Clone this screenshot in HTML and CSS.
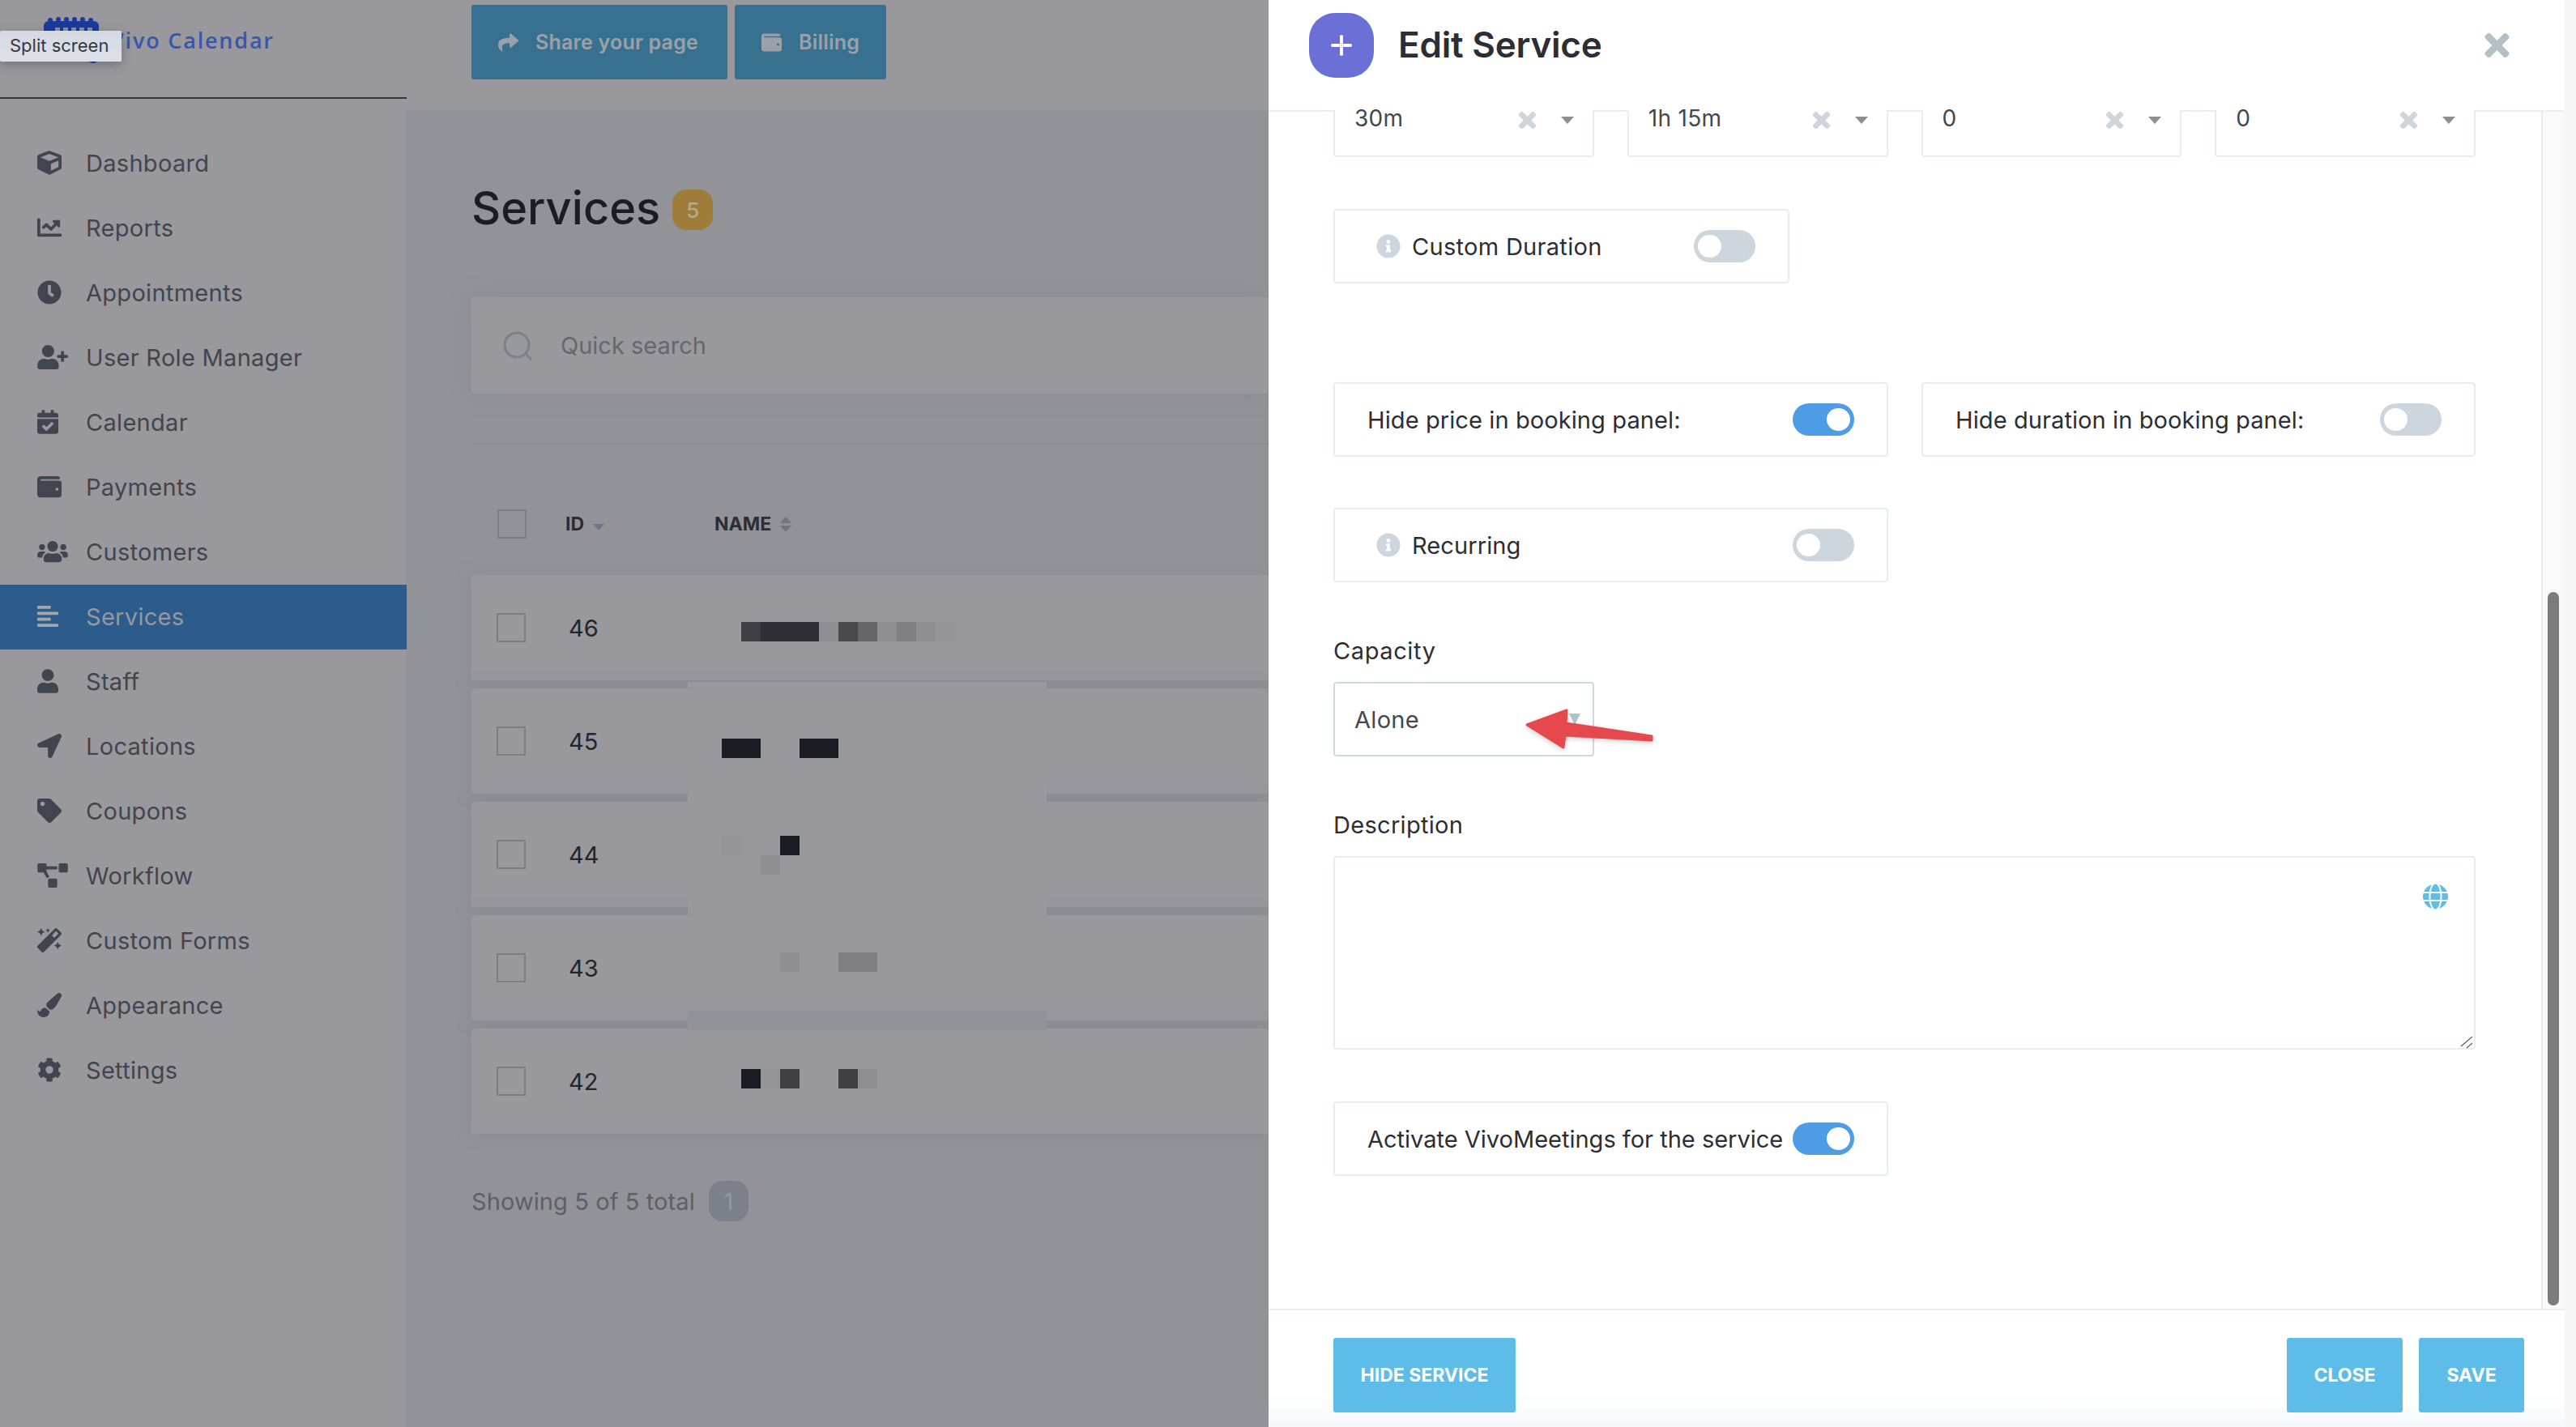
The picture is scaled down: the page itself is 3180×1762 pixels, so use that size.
FILE: index.html
```html
<!DOCTYPE html>
<html lang="en">
  <head>
    <meta charset="UTF-8" />
    <meta name="viewport" content="width=device-width, initial-scale=1.0" />
    <title>Vivo Calendar - Edit Service</title>
    <link rel="stylesheet" href="styles.css">
  </head>
  <body>
    <svg class="sprites" aria-hidden="true">
      <symbol id="i-cube" viewBox="0 0 512 512"><path d="M239.1 6.3l-208 78c-18.7 7-31.1 25-31.1 45v225.1c0 18.2 10.3 34.8 26.5 42.9l208 104c13.5 6.8 29.4 6.8 42.9 0l208-104c16.3-8.1 26.5-24.8 26.5-42.9V129.3c0-20-12.4-37.9-31.1-44.9l-208-78C262 2.2 250 2.2 239.1 6.3zM256 68.4l192 72v1.1l-192 78-192-78v-1.1l192-72zm32 356V275.5l160-65v133.9l-160 80z"/></symbol>
      <symbol id="i-chart" viewBox="0 0 512 512"><path d="M496 384H64V80c0-8.84-7.16-16-16-16H16C7.16 64 0 71.16 0 80v336c0 17.67 14.33 32 32 32h464c8.84 0 16-7.16 16-16v-32c0-8.84-7.16-16-16-16zM464 96H345.94c-21.38 0-32.09 25.85-16.97 40.97l32.4 32.4L288 242.75l-73.37-73.37c-12.5-12.5-32.76-12.5-45.25 0l-68.69 68.69c-6.25 6.25-6.25 16.38 0 22.63l22.62 22.62c6.25 6.25 16.38 6.25 22.63 0L192 237.25l73.37 73.37c12.5 12.5 32.76 12.5 45.25 0l96-96 32.4 32.4c15.12 15.12 40.97 4.41 40.97-16.97V112c.01-8.84-7.15-16-15.99-16z"/></symbol>
      <symbol id="i-clock" viewBox="0 0 512 512"><path d="M256,8C119,8,8,119,8,256S119,504,256,504,504,393,504,256,393,8,256,8Zm92.49,313h0l-20,25a16,16,0,0,1-22.49,2.5h0l-67-49.72a40,40,0,0,1-15-31.23V112a16,16,0,0,1,16-16h32a16,16,0,0,1,16,16V256l58,42.5A16,16,0,0,1,348.49,321Z"/></symbol>
      <symbol id="i-user-plus" viewBox="0 0 640 512"><path d="M624 208h-64v-64c0-8.8-7.2-16-16-16h-32c-8.8 0-16 7.2-16 16v64h-64c-8.8 0-16 7.2-16 16v32c0 8.8 7.2 16 16 16h64v64c0 8.8 7.2 16 16 16h32c8.8 0 16-7.2 16-16v-64h64c8.8 0 16-7.2 16-16v-32c0-8.8-7.2-16-16-16zm-400 48c70.7 0 128-57.3 128-128S294.7 0 224 0 96 57.3 96 128s57.3 128 128 128zm89.6 32h-16.7c-22.2 10.2-46.9 16-72.9 16s-50.6-5.8-72.9-16h-16.7C60.2 288 0 348.2 0 422.4V464c0 26.5 21.5 48 48 48h352c26.5 0 48-21.5 48-48v-41.6c0-74.2-60.2-134.4-134.4-134.4z"/></symbol>
      <symbol id="i-calendar" viewBox="0 0 448 512"><path d="M436 160H12c-6.627 0-12-5.373-12-12v-36c0-26.51 21.49-48 48-48h48V12c0-6.627 5.373-12 12-12h40c6.627 0 12 5.373 12 12v52h128V12c0-6.627 5.373-12 12-12h40c6.627 0 12 5.373 12 12v52h48c26.51 0 48 21.49 48 48v36c0 6.627-5.373 12-12 12zM12 192h424c6.627 0 12 5.373 12 12v260c0 26.51-21.49 48-48 48H48c-26.51 0-48-21.49-48-48V204c0-6.627 5.373-12 12-12zm333.296 95.947l-28.169-28.398c-4.667-4.705-12.265-4.736-16.97-.068L194.12 364.665l-45.98-46.352c-4.667-4.705-12.266-4.736-16.971-.068l-28.397 28.17c-4.705 4.667-4.736 12.265-.068 16.97l82.601 83.269c4.667 4.705 12.265 4.736 16.97.068l142.953-141.805c4.705-4.667 4.736-12.265.068-16.97z"/></symbol>
      <symbol id="i-wallet" viewBox="0 0 512 512"><path d="M461.2 128H80c-8.84 0-16-7.16-16-16s7.16-16 16-16h384c8.84 0 16-7.16 16-16 0-26.51-21.49-48-48-48H64C28.65 32 0 60.65 0 96v320c0 35.35 28.65 64 64 64h397.2c28.02 0 50.8-21.53 50.8-48V176c0-26.47-22.78-48-50.8-48zM416 340c-17.67 0-32-14.33-32-32s14.33-32 32-32 32 14.33 32 32-14.33 32-32 32z"/></symbol>
      <symbol id="i-users" viewBox="0 0 640 512"><path d="M96 224c35.3 0 64-28.7 64-64s-28.7-64-64-64-64 28.7-64 64 28.7 64 64 64zm448 0c35.3 0 64-28.7 64-64s-28.7-64-64-64-64 28.7-64 64 28.7 64 64 64zm32 32h-64c-17.6 0-33.5 7.1-45.1 18.6 40.3 22.1 68.9 62 75.1 109.4h66c17.7 0 32-14.3 32-32v-32c0-35.3-28.7-64-64-64zm-256 0c61.9 0 112-50.1 112-112S381.9 32 320 32 208 82.1 208 144s50.1 112 112 112zm76.8 32h-8.3c-20.8 10-43.9 16-68.5 16s-47.6-6-68.5-16h-8.3C179.6 288 128 339.6 128 403.2V432c0 26.5 21.5 48 48 48h288c26.5 0 48-21.5 48-48v-28.8c0-63.6-51.6-115.2-115.2-115.2zm-223.7-13.4C161.5 263.1 145.6 256 128 256H64c-35.3 0-64 28.7-64 64v32c0 17.7 14.3 32 32 32h65.9c6.3-47.4 34.9-87.3 75.2-109.4z"/></symbol>
      <symbol id="i-align" viewBox="0 0 448 512"><path d="M12.83 352h262.34A12.82 12.82 0 0 0 288 339.17v-38.34A12.82 12.82 0 0 0 275.17 288H12.83A12.82 12.82 0 0 0 0 300.83v38.34A12.82 12.82 0 0 0 12.83 352zm0-256h262.34A12.82 12.82 0 0 0 288 83.17V44.83A12.82 12.82 0 0 0 275.17 32H12.83A12.82 12.82 0 0 0 0 44.83v38.34A12.82 12.82 0 0 0 12.83 96zM432 160H16a16 16 0 0 0-16 16v32a16 16 0 0 0 16 16h416a16 16 0 0 0 16-16v-32a16 16 0 0 0-16-16zm0 256H16a16 16 0 0 0-16 16v32a16 16 0 0 0 16 16h416a16 16 0 0 0 16-16v-32a16 16 0 0 0-16-16z"/></symbol>
      <symbol id="i-user" viewBox="0 0 448 512"><path d="M224 256c70.7 0 128-57.3 128-128S294.7 0 224 0 96 57.3 96 128s57.3 128 128 128zm89.6 32h-16.7c-22.2 10.2-46.9 16-72.9 16s-50.6-5.8-72.9-16h-16.7C60.2 288 0 348.2 0 422.4V464c0 26.5 21.5 48 48 48h352c26.5 0 48-21.5 48-48v-41.6c0-74.2-60.2-134.4-134.4-134.4z"/></symbol>
      <symbol id="i-location" viewBox="0 0 512 512"><path d="M444.52 3.52L28.74 195.42c-47.97 22.39-31.98 92.75 19.19 92.75h175.91v175.91c0 51.17 70.36 67.17 92.75 19.19l191.9-415.78c15.99-38.39-25.59-79.97-63.97-63.97z"/></symbol>
      <symbol id="i-tag" viewBox="0 0 512 512"><path d="M0 252.118V48C0 21.49 21.49 0 48 0h204.118a48 48 0 0 1 33.941 14.059l211.882 211.882c18.745 18.745 18.745 49.137 0 67.882L293.823 497.941c-18.745 18.745-49.137 18.745-67.882 0L14.059 286.059A48 48 0 0 1 0 252.118zM112 64c-26.51 0-48 21.49-48 48s21.49 48 48 48 48-21.49 48-48-21.49-48-48-48z"/></symbol>
      <symbol id="i-diagram" viewBox="0 0 640 512"><path d="M384 320H256c-17.67 0-32 14.33-32 32v128c0 17.67 14.33 32 32 32h128c17.67 0 32-14.33 32-32V352c0-17.67-14.33-32-32-32zM192 32c0-17.67-14.33-32-32-32H32C14.33 0 0 14.33 0 32v128c0 17.67 14.33 32 32 32h95.72l73.16 128.04C211.98 300.98 232.4 288 256 288h.28L192 175.51V128h224V64H192V32zM608 0H480c-17.67 0-32 14.33-32 32v128c0 17.67 14.33 32 32 32h128c17.67 0 32-14.33 32-32V32c0-17.67-14.33-32-32-32z"/></symbol>
      <symbol id="i-magic" viewBox="0 0 512 512"><path d="M224 96l16-32 32-16-32-16-16-32-16 32-32 16 32 16 16 32zM80 160l26.66-53.33L160 80l-53.34-26.67L80 0 53.34 53.33 0 80l53.34 26.67L80 160zm352 128l-26.66 53.33L352 368l53.34 26.67L432 448l26.66-53.33L512 368l-53.34-26.67L432 288zm70.62-193.77L417.77 9.38C411.53 3.12 403.34 0 395.15 0c-8.19 0-16.38 3.12-22.63 9.38L9.38 372.52c-12.5 12.5-12.5 32.76 0 45.25l84.85 84.85c6.25 6.25 14.44 9.37 22.62 9.37 8.19 0 16.38-3.12 22.63-9.37l363.14-363.15c12.5-12.48 12.5-32.75 0-45.24zM359.45 203.46l-50.91-50.91 86.6-86.6 50.91 50.91-86.6 86.6z"/></symbol>
      <symbol id="i-brush" viewBox="0 0 512 512"><path d="M167.02 309.34c-40.12 2.58-76.53 17.86-97.19 72.3-2.35 6.21-8 9.98-14.59 9.98-11.11 0-45.46-27.67-55.25-34.35C0 439.62 37.93 512 128 512c75.86 0 128-43.77 128-120.19 0-3.11-.65-6.08-.97-9.13l-88.01-73.34zM457.89 0c-15.16 0-29.37 6.71-40.21 16.45C213.27 199.05 192 203.34 192 257.09c0 13.7 3.25 26.76 8.73 38.7l63.82 53.18c7.21 1.8 14.64 3.03 22.39 3.03 62.11 0 98.11-45.47 211.16-256.46 7.38-14.35 13.9-29.85 13.9-45.99C512 20.64 486 0 457.89 0z"/></symbol>
      <symbol id="i-cog" viewBox="0 0 512 512"><path d="M487.4 315.7l-42.6-24.6c4.3-23.2 4.3-47 0-70.2l42.6-24.6c4.9-2.8 7.1-8.6 5.5-14-11.1-35.6-30-67.8-54.7-94.6-3.8-4.1-10-5.1-14.8-2.3L380.8 110c-17.9-15.4-38.5-27.3-60.8-35.1V25.8c0-5.6-3.9-10.5-9.4-11.7-36.7-8.2-74.3-7.8-109.2 0-5.5 1.2-9.4 6.1-9.4 11.7V75c-22.2 7.9-42.8 19.8-60.8 35.1L88.7 85.5c-4.9-2.8-11-1.9-14.8 2.3-24.7 26.7-43.6 58.9-54.7 94.6-1.7 5.4.6 11.2 5.5 14L67.3 221c-4.3 23.2-4.3 47 0 70.2l-42.6 24.6c-4.9 2.8-7.1 8.6-5.5 14 11.1 35.6 30 67.8 54.7 94.6 3.8 4.1 10 5.1 14.8 2.3l42.6-24.6c17.9 15.4 38.5 27.3 60.8 35.1v49.2c0 5.6 3.9 10.5 9.4 11.7 36.7 8.2 74.3 7.8 109.2 0 5.5-1.2 9.4-6.1 9.4-11.7v-49.2c22.2-7.9 42.8-19.8 60.8-35.1l42.6 24.6c4.9 2.8 11 1.9 14.8-2.3 24.7-26.7 43.6-58.9 54.7-94.6 1.5-5.5-.7-11.3-5.6-14.1zM256 336c-44.1 0-80-35.9-80-80s35.9-80 80-80 80 35.9 80 80-35.9 80-80 80z"/></symbol>
      <symbol id="i-share" viewBox="0 0 512 512"><path d="M503.691 189.836L327.687 37.851C312.281 24.546 288 35.347 288 56.015v80.053C127.371 137.907 0 170.1 0 322.326c0 61.441 39.581 122.309 83.333 154.132 13.653 9.931 33.111-2.533 28.077-18.631C66.066 312.814 132.917 274.316 288 272.085V360c0 20.7 24.3 31.453 39.687 18.164l176.004-152c11.071-9.562 11.086-26.753 0-36.328z"/></symbol>
      <symbol id="i-info" viewBox="0 0 512 512"><path d="M256 8C119.043 8 8 119.083 8 256c0 136.997 111.043 248 248 248s248-111.003 248-248C504 119.083 392.957 8 256 8zm0 110c23.196 0 42 18.804 42 42s-18.804 42-42 42-42-18.804-42-42 18.804-42 42-42zm56 254c0 6.627-5.373 12-12 12h-88c-6.627 0-12-5.373-12-12v-24c0-6.627 5.373-12 12-12h12v-64h-12c-6.627 0-12-5.373-12-12v-24c0-6.627 5.373-12 12-12h64c6.627 0 12 5.373 12 12v100h12c6.627 0 12 5.373 12 12v24z"/></symbol>
      <symbol id="i-times" viewBox="-10 68 372 376"><path d="M242.72 256l100.07-100.07c12.28-12.28 12.28-32.19 0-44.48l-22.24-22.24c-12.28-12.28-32.19-12.28-44.48 0L176 189.28 75.93 89.21c-12.28-12.28-32.19-12.28-44.48 0L9.21 111.45c-12.28 12.28-12.28 32.19 0 44.48L109.28 256 9.21 356.07c-12.28 12.28-12.28 32.19 0 44.48l22.24 22.24c12.28 12.28 32.2 12.28 44.48 0L176 322.72l100.07 100.07c12.28 12.28 32.2 12.28 44.48 0l22.24-22.24c12.28-12.28 12.28-32.19 0-44.48L242.72 256z"/></symbol>
      <symbol id="i-globe" viewBox="0 0 496 512"><path d="M336.5 160C322 70.7 287.8 8 248 8s-74 62.7-88.5 152h177zM152 256c0 22.2 1.2 43.5 3.3 64h185.3c2.1-20.5 3.3-41.8 3.3-64s-1.2-43.5-3.3-64H155.3c-2.1 20.5-3.3 41.8-3.3 64zm324.7-96c-28.6-67.9-86.5-120.4-158-141.6 24.4 33.8 41.2 84.7 50 141.6h108zM177.2 18.4C105.8 39.6 47.8 92.1 19.3 160h108c8.7-56.9 25.5-107.8 49.9-141.6zM487.4 192H372.7c2.1 21 3.3 42.5 3.3 64s-1.2 43-3.3 64h114.6c5.5-20.5 8.6-41.8 8.6-64s-3.1-43.5-8.5-64zM120 256c0-21.5 1.2-43 3.3-64H8.6C3.2 212.5 0 233.8 0 256s3.2 43.5 8.6 64h114.6c-2-21-3.2-42.5-3.2-64zm39.5 96c14.5 89.3 48.7 152 88.5 152s74-62.7 88.5-152h-177zm159.3 141.6c71.4-21.2 129.4-73.7 158-141.6h-108c-8.8 56.9-25.6 107.8-50 141.6zM19.3 352c28.6 67.9 86.5 120.4 158 141.6-24.4-33.8-41.2-84.7-50-141.6h-108z"/></symbol>
    </svg>

    <div class="tooltip">Split screen</div>

    <div class="page">
      <aside class="sidebar">
        <div class="brand">
          <svg class="brand-icon" viewBox="0 0 72 58">
            <path d="M8 6h56a6 6 0 0 1 6 6v30a6 6 0 0 1-6 6H8a6 6 0 0 1-6-6V12a6 6 0 0 1 6-6z" fill="#1b3b9c"/>
            <g fill="#1b3b9c"><circle cx="10" cy="5" r="3"/><circle cx="20" cy="4" r="3"/><circle cx="30" cy="4" r="3"/><circle cx="40" cy="4" r="3"/><circle cx="50" cy="4" r="3"/><circle cx="60" cy="5" r="3"/><circle cx="63" cy="52" r="6"/></g>
            <g fill="#8d90a8"><rect x="16" y="14" width="6" height="5"/><rect x="26" y="14" width="6" height="5"/><rect x="36" y="14" width="6" height="5"/><rect x="46" y="14" width="6" height="5"/><rect x="56" y="14" width="6" height="5"/></g>
          </svg>
          <span class="brand-name">Vivo Calendar</span>
        </div>
        <nav class="nav">
          <a class="nav-item"><span class="nav-icon"><svg class="w1"><use href="#i-cube"/></svg></span>Dashboard</a>
          <a class="nav-item"><span class="nav-icon"><svg class="w1"><use href="#i-chart"/></svg></span>Reports</a>
          <a class="nav-item"><span class="nav-icon"><svg class="w1"><use href="#i-clock"/></svg></span>Appointments</a>
          <a class="nav-item"><span class="nav-icon"><svg class="w2"><use href="#i-user-plus"/></svg></span>User Role Manager</a>
          <a class="nav-item"><span class="nav-icon"><svg class="w3"><use href="#i-calendar"/></svg></span>Calendar</a>
          <a class="nav-item"><span class="nav-icon"><svg class="w1"><use href="#i-wallet"/></svg></span>Payments</a>
          <a class="nav-item"><span class="nav-icon"><svg class="w2"><use href="#i-users"/></svg></span>Customers</a>
          <a class="nav-item active"><span class="nav-icon"><svg class="w3"><use href="#i-align"/></svg></span>Services</a>
          <a class="nav-item"><span class="nav-icon"><svg class="w3"><use href="#i-user"/></svg></span>Staff</a>
          <a class="nav-item"><span class="nav-icon"><svg class="w1"><use href="#i-location"/></svg></span>Locations</a>
          <a class="nav-item"><span class="nav-icon"><svg class="w1"><use href="#i-tag"/></svg></span>Coupons</a>
          <a class="nav-item"><span class="nav-icon"><svg class="w2"><use href="#i-diagram"/></svg></span>Workflow</a>
          <a class="nav-item"><span class="nav-icon"><svg class="w1"><use href="#i-magic"/></svg></span>Custom Forms</a>
          <a class="nav-item"><span class="nav-icon"><svg class="w1"><use href="#i-brush"/></svg></span>Appearance</a>
          <a class="nav-item"><span class="nav-icon"><svg class="w1"><use href="#i-cog"/></svg></span>Settings</a>
        </nav>
      </aside>

      <main class="main">
        <div class="topbar">
          <a class="top-btn share"><svg><use href="#i-share"/></svg>Share your page</a>
          <a class="top-btn billing"><svg><use href="#i-wallet"/></svg>Billing</a>
        </div>

        <div class="content">
          <h1 class="page-title">Services <span class="count">5</span></h1>

          <div class="search">
            <svg viewBox="0 0 36 36" fill="none" stroke="#78828c" stroke-width="3"><circle cx="17" cy="17" r="15"/><path d="M28 28l7 7"/></svg>
            <span>Quick search</span>
          </div>

          <div class="divider"></div>

          <div class="table-head">
            <span class="check"></span>
            <span class="col-id">ID<i class="sort-down"></i></span>
            <span class="col-name">NAME<i class="sort-both"></i></span>
          </div>

          <div class="rows">
            <div class="row"><span class="check"></span><span class="row-id">46</span></div>
            <div class="row"><span class="check"></span><span class="row-id">45</span></div>
            <div class="row"><span class="check"></span><span class="row-id">44</span></div>
            <div class="row"><span class="check"></span><span class="row-id">43</span></div>
            <div class="row"><span class="check"></span><span class="row-id">42</span></div>
          </div>

          <div class="showing">Showing 5 of 5 total <span class="pages">1</span></div>
        </div>

        <!-- blurred names, they lie over the rows -->
        <div class="mask"><div class="mask-foot"></div></div>
        <div class="pixels">
          <div class="pixel-line">
            <i></i><i class="s3"></i><i class="s2"></i><i class="s2"></i><i class="s2"></i><i class="s7"></i><i class="s4"></i><i class="s5"></i><i class="s7"></i><i class="s6"></i><i class="s7"></i><i class="s8"></i>
          </div>
          <div class="pixel-line gap-5">
            <i class="s1"></i><i class="s1"></i><i></i><i></i><i class="s1"></i><i class="s1"></i>
          </div>
          <div class="pixel-line gap-4">
            <i class="s8"></i><i></i><i></i><i class="s1"></i>
          </div>
          <div class="pixel-line">
            <i></i><i></i><i class="s7"></i>
          </div>
          <div class="pixel-line gap-4">
            <i></i><i></i><i></i><i class="s7"></i><i></i><i></i><i class="s6"></i><i class="s6"></i>
          </div>
          <div class="pixel-line gap-5">
            <i></i><i class="s1"></i><i class="s8"></i><i class="s3"></i><i></i><i></i><i class="s3"></i><i class="s7"></i>
          </div>
        </div>
      </main>

      <section class="modal">
        <header class="modal-head">
          <span class="modal-icon"><svg viewBox="0 0 26 26"><path d="M13 2v22M2 13h22"/></svg></span>
          <h2>Edit Service</h2>
          <svg class="modal-close"><use href="#i-times"/></svg>
        </header>

        <div class="modal-body">
          <div class="form">
            <div class="selects">
              <div class="select-cut">30m<svg><use href="#i-times"/></svg><i class="caret"></i></div>
              <div class="select-cut">1h 15m<svg><use href="#i-times"/></svg><i class="caret"></i></div>
              <div class="select-cut">0<svg><use href="#i-times"/></svg><i class="caret"></i></div>
              <div class="select-cut">0<svg><use href="#i-times"/></svg><i class="caret"></i></div>
            </div>

            <div class="option info-option custom-duration">
              <svg class="info"><use href="#i-info"/></svg>
              <span>Custom Duration</span>
              <span class="toggle"><i></i></span>
            </div>

            <div class="two-col hide-row">
              <div class="option">
                <span>Hide price in booking panel:</span>
                <span class="toggle on"><i></i></span>
              </div>
              <div class="option">
                <span>Hide duration in booking panel:</span>
                <span class="toggle"><i></i></span>
              </div>
            </div>

            <div class="two-col recurring-row">
              <div class="option info-option">
                <svg class="info"><use href="#i-info"/></svg>
                <span>Recurring</span>
                <span class="toggle"><i></i></span>
              </div>
            </div>

            <label class="field-label capacity-label">Capacity</label>
            <div class="capacity">
              <span>Alone</span>
              <i class="caret light"></i>
              <svg class="red-arrow" viewBox="0 0 170 60"><path d="M8 25L57 7L56 23L162 39L162 44L55 38L53 53Z"/></svg>
            </div>

            <label class="field-label description-label">Description</label>
            <div class="description">
              <textarea></textarea>
              <svg class="globe"><use href="#i-globe"/></svg>
              <svg class="grip" viewBox="0 0 16 16"><path d="M1 13L15 1M8 15L15 9"/></svg>
            </div>

            <div class="two-col meetings-row">
              <div class="option">
                <span>Activate VivoMeetings for the service</span>
                <span class="toggle on"><i></i></span>
              </div>
            </div>
          </div>
          <div class="scroll-track"><div class="scroll-thumb"></div></div>
        </div>

        <footer class="modal-foot">
          <a class="btn hide">HIDE SERVICE</a>
          <a class="btn close">CLOSE</a>
          <a class="btn save">SAVE</a>
        </footer>
      </section>
    </div>
  </body>
</html>
```

FILE: styles.css
```css
* {
  box-sizing: border-box;
}

html,
body {
  margin: 0;
  height: 1762px;
  overflow: hidden;
}

body {
  position: relative;
  background: #f6f6f6;
  font-family: Inter, "Open Sans", sans-serif;
  font-size: 29px;
  color: #2c2e33;
}

.sprites {
  display: none;
}

.tooltip {
  position: absolute;
  left: 0;
  top: 38px;
  z-index: 5;
  width: 150px;
  height: 38px;
  padding-left: 12px;
  background: linear-gradient(#d5dae2, #dde2ea);
  box-shadow: 0 4px 14px rgba(0, 0, 0, 0.25);
  border-radius: 2px;
  font-size: 22px;
  line-height: 37px;
  color: #36383d;
}

.page {
  display: flex;
  height: 1762px;
}

/* sidebar */
.sidebar {
  flex: 0 0 502px;
  background: #99989d;
}

.brand {
  display: flex;
  height: 122px;
  padding: 20px 0 0 52px;
  border-bottom: 2px solid #36373c;
}

.brand-icon {
  width: 72px;
  height: 58px;
}

.brand-name {
  margin: 11px 0 0 12px;
  font-family: "Open Sans", sans-serif;
  font-size: 27px;
  font-weight: 600;
  letter-spacing: 1.8px;
  color: #3558ae;
}

.nav {
  margin-top: 40px;
}

.nav-item {
  display: flex;
  align-items: center;
  height: 80px;
  padding: 0 0 2px 46px;
  color: #41454f;
  letter-spacing: 0.3px;
}

.nav-item.active {
  background: #2c5c8c;
  color: #96989f;
}

.nav-icon {
  display: flex;
  flex: 0 0 60px;
  fill: #41454f;
}

.active .nav-icon {
  fill: #a3a6ac;
}

.nav-icon svg {
  height: 30px;
}

.nav-icon .w1 {
  width: 30px;
}

.nav-icon .w2 {
  width: 38px;
}

.nav-icon .w3 {
  width: 26px;
}

/* main */
.main {
  position: relative;
  flex: 0 0 1064px;
  overflow: hidden;
  background: #929398;
}

.topbar {
  display: flex;
  gap: 9px;
  height: 136px;
  padding: 6px 0 0 80px;
  background: #99989d;
}

.top-btn {
  display: flex;
  align-items: center;
  height: 92px;
  padding-left: 33px;
  border-radius: 3px;
  background: #38718f;
  color: #9ca0a8;
  font-size: 25px;
  font-weight: 600;
  letter-spacing: 0.2px;
  fill: #9ca0a8;
}

.top-btn svg {
  width: 25px;
  height: 25px;
  margin-right: 21px;
}

.top-btn.share {
  width: 316px;
}

.top-btn.billing {
  width: 187px;
}

.content {
  padding-left: 80px;
}

.page-title {
  display: flex;
  align-items: center;
  height: 60px;
  margin: 91px 0 0;
  font-size: 56px;
  font-weight: 500;
  color: #1c1d22;
}

.count {
  display: flex;
  align-items: center;
  justify-content: center;
  width: 50px;
  height: 50px;
  margin: 4px 0 0 15px;
  border-radius: 17px;
  background: #a07c3a;
  color: #b6a98c;
  font-size: 26px;
}

.search {
  display: flex;
  align-items: center;
  height: 119px;
  margin-top: 80px;
  padding-left: 39px;
  border-radius: 4px;
  background: #99989d;
  box-shadow: 0 0 30px rgba(120, 120, 130, 0.25);
  color: #63676f;
}

.search svg {
  width: 36px;
  height: 36px;
  margin-right: 35px;
}

.divider {
  height: 2px;
  margin-top: 61px;
  background: #898a94;
}

.table-head {
  display: flex;
  align-items: center;
  height: 36px;
  margin-top: 80px;
  padding-left: 32px;
  font-size: 23px;
  font-weight: 700;
  color: #2d2e35;
}

.check {
  flex: 0 0 36px;
  height: 36px;
  border: 2px solid #7b7d83;
  border-radius: 1px;
}

.col-id {
  display: flex;
  align-items: center;
  width: 184px;
  margin-left: 48px;
}

.col-name {
  display: flex;
  align-items: center;
}

.sort-down {
  margin: 8px 0 0 11px;
  border-left: 7px solid transparent;
  border-right: 7px solid transparent;
  border-top: 8px solid #6e7680;
}

.sort-both {
  display: flex;
  flex-direction: column;
  gap: 3px;
  margin-left: 11px;
}

.sort-both::before,
.sort-both::after {
  content: "";
  border-left: 7px solid transparent;
  border-right: 7px solid transparent;
}

.sort-both::before {
  border-bottom: 8px solid #6e7680;
}

.sort-both::after {
  border-top: 8px solid #6e7680;
}

.rows {
  display: flex;
  flex-direction: column;
  gap: 10px;
  margin-top: 45px;
}

.row {
  display: flex;
  align-items: center;
  height: 130px;
  padding-left: 31px;
  border-radius: 4px;
  background: #99989d;
  box-shadow: 0 0 22px rgba(120, 120, 130, 0.3);
}

.row-id {
  margin-left: 53px;
  color: #24252b;
}

.showing {
  display: flex;
  align-items: center;
  height: 50px;
  margin-top: 58px;
  letter-spacing: 0.1px;
  color: #5c6068;
}

.pages {
  display: flex;
  align-items: center;
  justify-content: center;
  width: 49px;
  height: 50px;
  margin-left: 17px;
  border-radius: 17px;
  background: #7b808a;
  color: #96989f;
}

.mask {
  position: absolute;
  left: 347px;
  top: 842px;
  display: flex;
  align-items: flex-end;
  width: 443px;
  height: 430px;
  background: #99989d;
}

.mask-foot {
  width: 100%;
  height: 24px;
  background: #929398;
}

.pixels {
  position: absolute;
  left: 389px;
  top: 768px;
}

.pixel-line {
  display: flex;
  height: 24px;
}

.pixel-line i {
  flex: 0 0 24px;
}

.gap-5 {
  margin-top: 120px;
}

.gap-4 {
  margin-top: 96px;
}

.s1 { background: #1a1c23; }
.s2 { background: #2f2f35; }
.s3 { background: #3f3f44; }
.s4 { background: #48484d; }
.s5 { background: #65656a; }
.s6 { background: #807f84; }
.s7 { background: #8f8e93; }
.s8 { background: #959499; }

/* modal */
.modal {
  display: flex;
  flex-direction: column;
  flex: 0 0 1600px;
  background: #fff;
}

.modal-head {
  display: flex;
  align-items: center;
  flex: 0 0 136px;
  height: 136px;
  padding: 0 68px 24px 50px;
}

.modal-icon {
  display: flex;
  align-items: center;
  justify-content: center;
  width: 80px;
  height: 80px;
  border-radius: 32px;
  background: #6c70d6;
}

.modal-icon svg {
  width: 26px;
  height: 26px;
  fill: none;
  stroke: #fff;
  stroke-width: 4;
  stroke-linecap: round;
}

.modal-head h2 {
  flex: 1;
  margin: 0 0 2px 30px;
  font-size: 44px;
  font-weight: 600;
  letter-spacing: -0.2px;
  color: #2c2e33;
}

.modal-close {
  width: 31px;
  height: 32px;
  fill: #b3c0c7;
  stroke: #b3c0c7;
  stroke-width: 12;
}

.modal-body {
  display: flex;
  flex: 1;
  min-height: 0;
  border-top: 2px solid #e8ecf4;
}

.form {
  flex: 1;
  padding-left: 80px;
  letter-spacing: 0.3px;
}

.selects {
  display: grid;
  grid-template-columns: repeat(4, 321.75px);
  gap: 41px;
  height: 58px;
  margin-top: -2px;
}

.select-cut {
  display: flex;
  align-items: flex-start;
  padding-left: 24px;
  border: 2px solid #e8ecf4;
  border-top: 0;
  border-radius: 0 0 4px 4px;
  background: #fff;
  color: #44474f;
  font-size: 28px;
  line-height: 20px;
}

.select-cut svg {
  width: 23px;
  height: 21px;
  margin: 2px 0 0 auto;
  fill: #cfd5dd;
  stroke: #cfd5dd;
  stroke-width: 26;
}

.caret {
  flex: none;
  margin: 8px 23px 0 30px;
  border-left: 8px solid transparent;
  border-right: 8px solid transparent;
  border-top: 9px solid #8f8f8f;
}

.option {
  display: flex;
  align-items: center;
  justify-content: space-between;
  height: 92px;
  padding: 0 40px 0 40px;
  border: 2px solid #e8ecf4;
  border-radius: 4px;
}

.info-option {
  padding-left: 51px;
  justify-content: flex-start;
}

.info-option .toggle {
  margin-left: auto;
}

.custom-duration {
  width: 563px;
  margin-top: 64px;
}

.info {
  width: 30px;
  height: 30px;
  margin-right: 14px;
  fill: #cdd6dc;
}

.toggle {
  display: flex;
  align-items: center;
  flex: none;
  width: 76px;
  height: 40px;
  padding: 0 5px;
  border-radius: 20px;
  background: #cdd6dc;
}

.toggle i {
  width: 29px;
  height: 28px;
  border-radius: 50%;
  background: #fff;
}

.toggle.on {
  justify-content: flex-end;
  background: #4e9be6;
}

.two-col {
  display: grid;
  grid-template-columns: 685px 684px;
  gap: 41px;
}

.hide-row {
  margin-top: 122px;
  letter-spacing: 0.1px;
}

.recurring-row {
  margin-top: 63px;
  letter-spacing: 0.1px;
}

.field-label {
  display: block;
  height: 40px;
  line-height: 40px;
  color: #2c2e33;
}

.capacity-label {
  margin-top: 65px;
  letter-spacing: 0.6px;
}

.capacity {
  position: relative;
  display: flex;
  align-items: center;
  justify-content: space-between;
  width: 322px;
  height: 92px;
  margin-top: 18px;
  padding-left: 24px;
  border: 2px solid #d2d8e2;
  border-radius: 4px;
  color: #44474f;
}

.caret.light {
  margin: 0 15px 0 0;
  border-left-width: 7px;
  border-right-width: 7px;
  border-top: 14px solid #b3c0c7;
}

.red-arrow {
  position: absolute;
  left: 229px;
  top: 26px;
  width: 170px;
  height: 60px;
  fill: #e5484d;
  stroke: #e5484d;
  stroke-width: 3;
  stroke-linejoin: round;
  filter: drop-shadow(0 2px 3px rgba(0, 0, 0, 0.2));
}

.description-label {
  margin-top: 65px;
}

.description {
  position: relative;
  width: 1410px;
  height: 239px;
  margin-top: 18px;
}

.description textarea {
  display: block;
  width: 100%;
  height: 100%;
  border: 2px solid #e8ecf4;
  border-radius: 4px;
  outline: 0;
  resize: none;
}

.globe {
  position: absolute;
  right: 34px;
  top: 34px;
  width: 31px;
  height: 32px;
  fill: #5fbde8;
}

.grip {
  position: absolute;
  right: 3px;
  bottom: 1px;
  width: 16px;
  height: 16px;
  fill: none;
  stroke: #5a5a5a;
  stroke-width: 1.2;
}

.meetings-row {
  margin-top: 64px;
  letter-spacing: 0;
}

.scroll-track {
  flex: 0 0 29px;
  padding: 593px 0 0 6px;
  border-left: 2px solid #e9e9e9;
  background: #f9f9f9;
}

.scroll-thumb {
  width: 14px;
  height: 881px;
  border-radius: 7px;
  background: #7b7b7b;
}

.modal-foot {
  display: flex;
  flex: 0 0 146px;
  gap: 20px;
  padding: 34px 50px 0 80px;
  border-top: 2px solid #e8ecf4;
  background: linear-gradient(#fff 70%, #f7f8f9);
}

.btn {
  display: flex;
  align-items: center;
  justify-content: center;
  height: 92px;
  border-radius: 3px;
  background: #5dbde8;
  color: #fff;
  font-size: 23px;
  font-weight: 700;
}

.btn.hide {
  width: 225px;
  margin-right: auto;
}

.btn.close {
  width: 143px;
}

.btn.save {
  width: 130px;
}
```
